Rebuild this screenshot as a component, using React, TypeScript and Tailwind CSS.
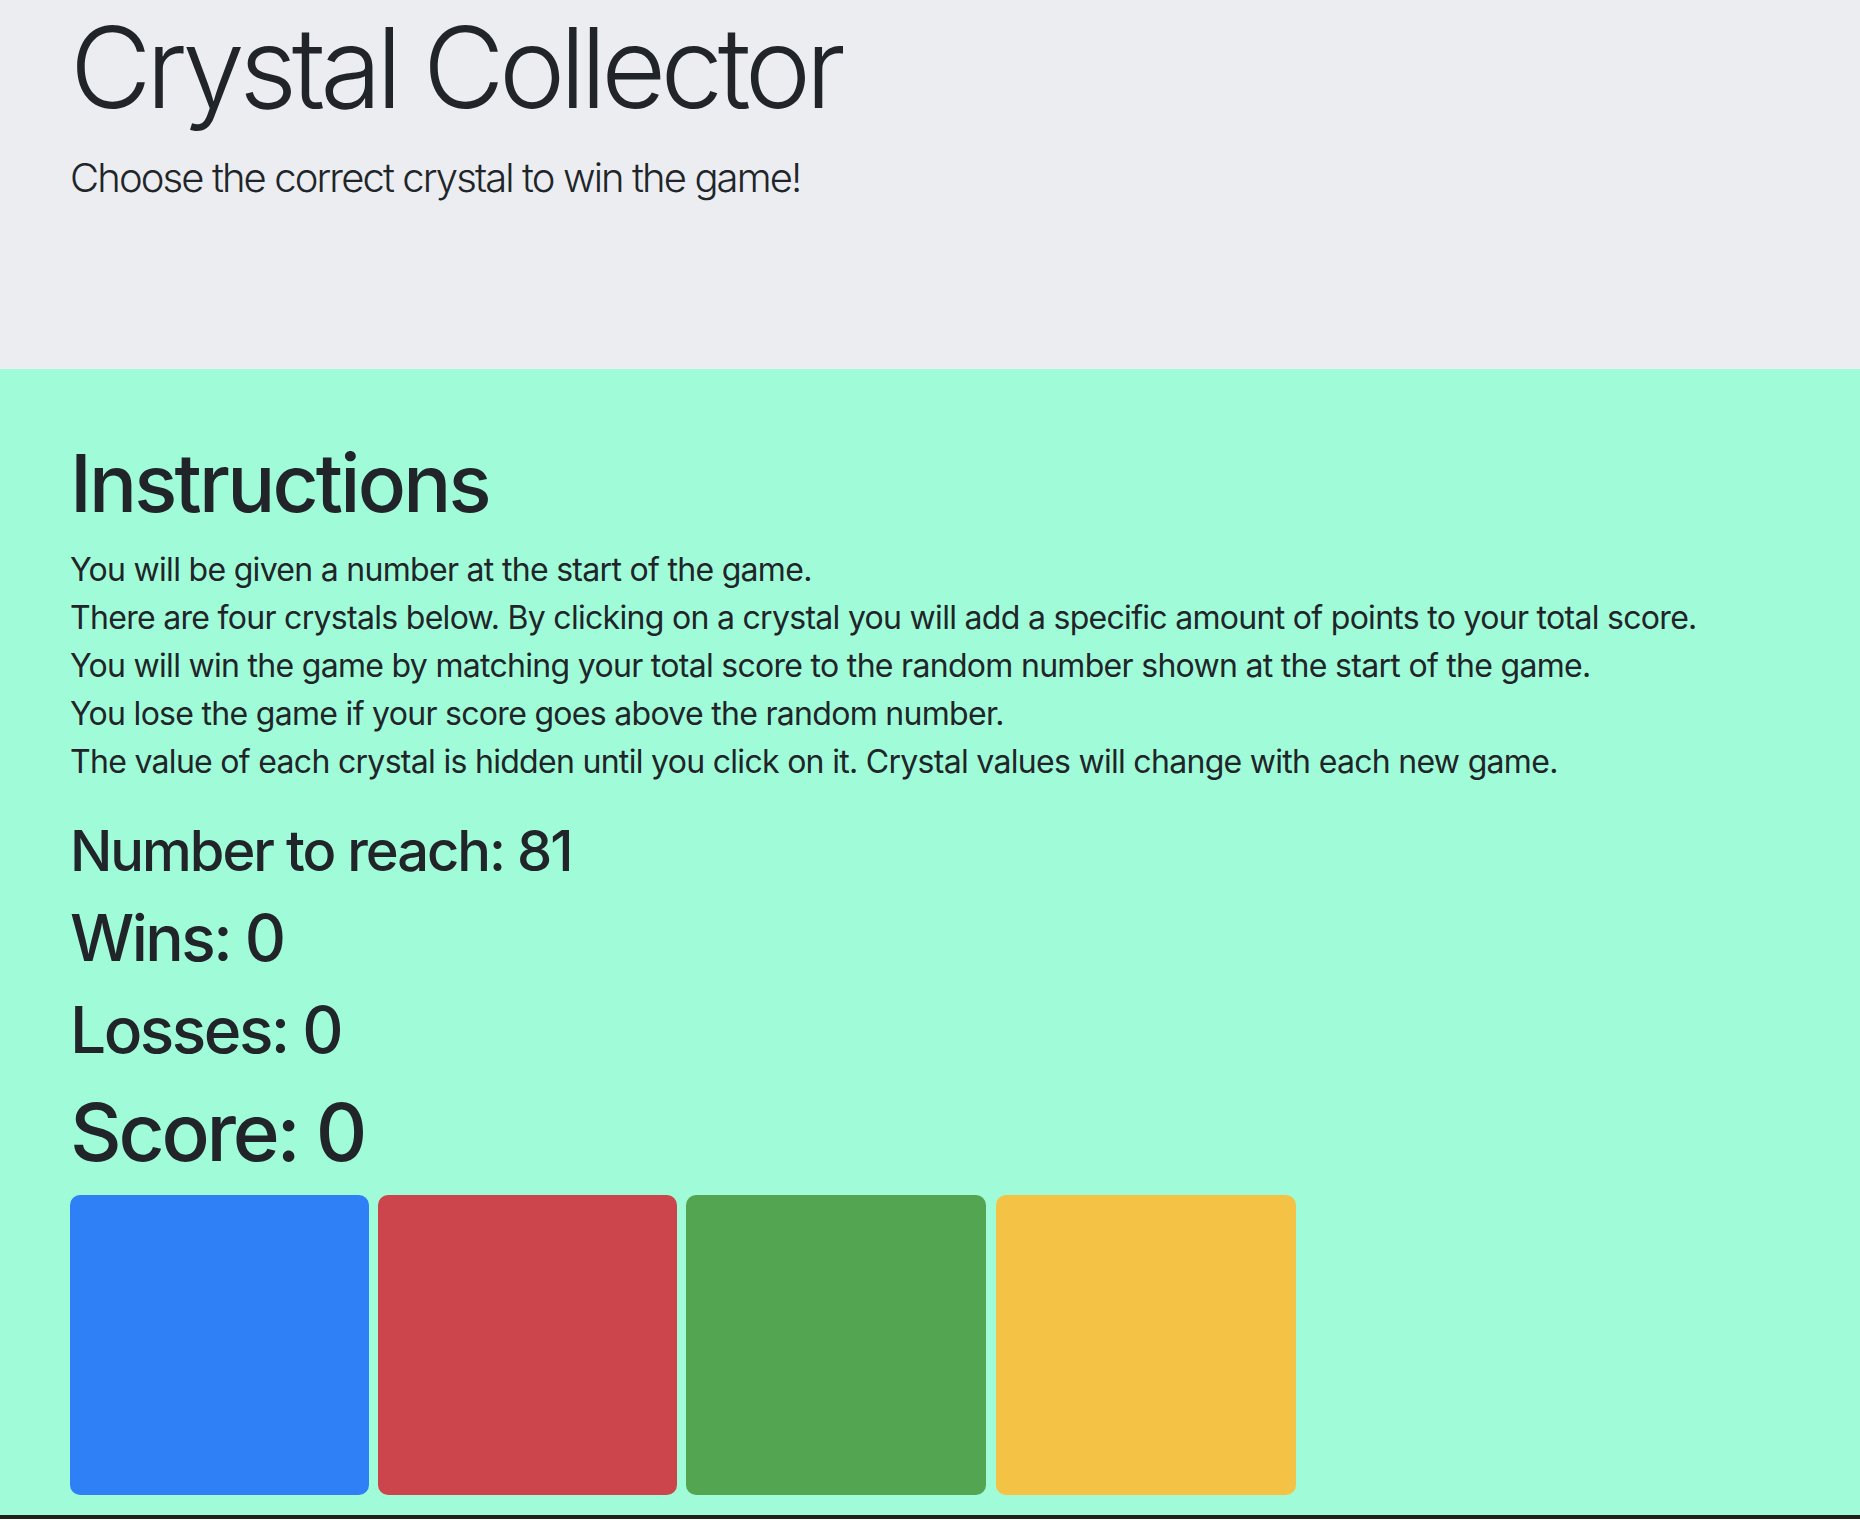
export default function App() {
  const font = { fontFamily: "Inter, 'Noto Sans', sans-serif" };
  return (
    <div className="w-full text-[#212529]" style={font}>
      <div className="bg-[#ebedf0] h-[369px] pl-[70px] pt-[11px]">
        <h1 className="text-[112px] leading-[112px] font-light tracking-[-5.5px]">Crystal Collector</h1>
        <p className="mt-[31px] text-[40px] leading-[48px] font-light tracking-[-1.9px]">Choose the correct crystal to win the game!</p>
      </div>
      <div className="bg-[#a0fcd8] pl-[70px] pt-[66px] pb-[20px]">
        <h1 className="text-[80px] leading-[96px] font-medium tracking-[-2.8px]">Instructions</h1>
        <div className="mt-[15px] text-[32px] leading-[48px] tracking-[-0.7px]">
          <p>You will be given a number at the start of the game.</p>
          <p>There are four crystals below. By clicking on a crystal you will add a specific amount of points to your total score.</p>
          <p>You will win the game by matching your total score to the random number shown at the start of the game.</p>
          <p>You lose the game if your score goes above the random number.</p>
          <p>The value of each crystal is hidden until you click on it. Crystal values will change with each new game.</p>
        </div>
        <h3 className="mt-[33px] text-[56px] leading-[64px] font-medium tracking-[-2px]">Number to reach: 81</h3>
        <h2 className="mt-[19px] text-[64px] leading-[72px] font-medium tracking-[-2.5px]">Wins: 0</h2>
        <h2 className="mt-[20px] text-[64px] leading-[72px] font-medium tracking-[-2.5px]">Losses: 0</h2>
        <h1 className="mt-[18px] text-[80px] leading-[96px] font-medium tracking-[-3.2px]">Score: 0</h1>
        <div className="mt-[15px] flex">
          <div className="w-[299px] h-[300px] rounded-[10px] bg-[#2f7ff6]" />
          <div className="ml-[9px] w-[299px] h-[300px] rounded-[10px] bg-[#cc444c]" />
          <div className="ml-[9px] w-[300px] h-[300px] rounded-[10px] bg-[#53a552]" />
          <div className="ml-[10px] w-[300px] h-[300px] rounded-[10px] bg-[#f4c244]" />
        </div>
      </div>
      <div className="h-[4px] bg-[#1c211b]" />
    </div>
  );
}
